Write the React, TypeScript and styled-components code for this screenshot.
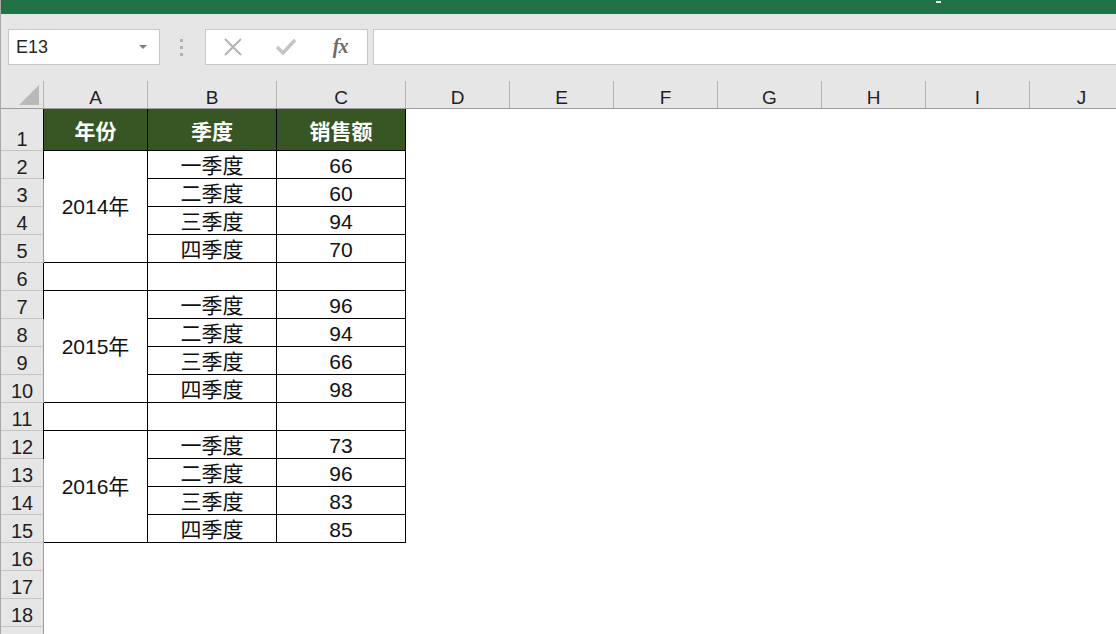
import React from "react";
import styled, { createGlobalStyle } from "styled-components";

const GlobalStyle = createGlobalStyle`
  html, body {
    margin: 0;
    padding: 0;
    width: 1116px;
    height: 634px;
    overflow: hidden;
    background: #ffffff;
  }
  body {
    font-family: "Liberation Sans", "Noto Sans CJK SC", sans-serif;
  }
`;

const Window = styled.div`
  width: 1116px;
  height: 634px;
  overflow: hidden;
  box-sizing: border-box;
  border-left: 1px solid #a8a8a8;
  display: flex;
  flex-direction: column;
`;

const TitleBar = styled.div`
  height: 14px;
  background: #217346;
  display: flex;
  align-items: flex-start;
  flex-shrink: 0;
`;

const WinDash = styled.div`
  margin-left: 935px;
  margin-top: 1px;
  width: 5px;
  height: 2px;
  background: #ffffff;
`;

const Toolbar = styled.div`
  height: 67px;
  flex-shrink: 0;
  box-sizing: border-box;
  background: #e6e6e6;
  display: flex;
  align-items: flex-start;
  padding: 15px 0 0 7px;
`;

const NameBox = styled.div`
  width: 152px;
  height: 36px;
  box-sizing: border-box;
  background: #ffffff;
  border: 1px solid #c6c6c6;
  display: flex;
  align-items: center;
  padding: 0 12px 0 7px;
  font-size: 18px;
  color: #262626;
`;

const DropArrow = styled.span`
  margin-left: auto;
  width: 0;
  height: 0;
  border-left: 4px solid transparent;
  border-right: 4px solid transparent;
  border-top: 4px solid #808080;
`;

const Grip = styled.div`
  margin: 10px 22px 0 20px;
  display: flex;
  flex-direction: column;
  gap: 4px;
`;

const GripDot = styled.span`
  width: 3px;
  height: 3px;
  background: #b0b0b0;
`;

const FxBox = styled.div`
  width: 163px;
  height: 36px;
  box-sizing: border-box;
  background: #ffffff;
  border: 1px solid #c6c6c6;
  display: grid;
  grid-template-columns: repeat(3, 1fr);
  align-items: center;
  justify-items: center;
`;

const FxLabel = styled.span`
  font-family: "Liberation Serif", "DejaVu Serif", serif;
  font-style: italic;
  font-weight: bold;
  font-size: 20px;
  color: #6b6b6b;
  letter-spacing: -1px;
  margin-top: -2px;
`;

const FormulaInput = styled.div`
  flex: 1;
  margin-left: 5px;
  height: 36px;
  box-sizing: border-box;
  background: #ffffff;
  border: 1px solid #c6c6c6;
  border-right: none;
`;

const Sheet = styled.div`
  display: grid;
  grid-template-columns: 43px 104px 129px 129px repeat(7, 104px);
  grid-template-rows: 28px 42px repeat(18, 28px);
  background: #ffffff;
`;

const Corner = styled.div`
  background: #e6e6e6;
  box-sizing: border-box;
  border-right: 1px solid #b4b4b4;
  border-bottom: 1px solid #9c9c9c;
  display: flex;
  align-items: flex-end;
  justify-content: flex-end;
  padding: 0 4px 3px 0;
`;

const CornerTriangle = styled.span`
  width: 0;
  height: 0;
  border-left: 20px solid transparent;
  border-bottom: 20px solid #b8b8b8;
`;

const ColHead = styled.div`
  background: #e6e6e6;
  box-sizing: border-box;
  border-right: 1px solid #b4b4b4;
  border-bottom: 1px solid #9c9c9c;
  display: flex;
  align-items: flex-end;
  justify-content: center;
  font-size: 19px;
  line-height: 21px;
  color: #1f1f1f;
`;

const RowNum = styled.div`
  grid-column: 1;
  background: #e6e6e6;
  box-sizing: border-box;
  border-right: 1px solid #9c9c9c;
  border-bottom: 1px solid #c4c4c4;
  display: flex;
  align-items: flex-end;
  justify-content: center;
  font-size: 20px;
  line-height: 22px;
  color: #1f1f1f;
`;

const Cell = styled.div<{ $first?: boolean; $span?: number; $head?: boolean }>`
  box-sizing: border-box;
  border-right: 1px solid #000000;
  border-bottom: 1px solid #000000;
  ${(p) => (p.$first ? "border-left: 1px solid #000000; margin-left: -1px;" : "")}
  ${(p) => (p.$span ? `grid-row: span ${p.$span};` : "")}
  background: ${(p) => (p.$head ? "#375623" : "#ffffff")};
  color: ${(p) => (p.$head ? "#ffffff" : "#111111")};
  font-weight: ${(p) => (p.$head ? 700 : 400)};
  font-size: 21px;
  line-height: 24px;
  display: flex;
  justify-content: center;
  align-items: ${(p) => (p.$head || p.$span ? "center" : "flex-end")};
  padding-top: ${(p) => (p.$head ? "4px" : "0")};
`;

const XIcon = () => (
  <svg width="20" height="18" viewBox="0 0 20 18">
    <path d="M2 1 L18 17 M18 1 L2 17" stroke="#b3b3b3" strokeWidth="2" fill="none" />
  </svg>
);

const CheckIcon = () => (
  <svg width="24" height="18" viewBox="0 0 24 18">
    <path d="M3 9 L9 15 L21 2" stroke="#c4c4c4" strokeWidth="3.4" fill="none" />
  </svg>
);

const columns = ["A", "B", "C", "D", "E", "F", "G", "H", "I", "J"];
const quarters = ["一季度", "二季度", "三季度", "四季度"];
const years = [
  { year: "2014年", values: [66, 60, 94, 70] },
  { year: "2015年", values: [96, 94, 66, 98] },
  { year: "2016年", values: [73, 96, 83, 85] },
];

function App() {
  const body: React.ReactNode[] = [];
  let row = 2;
  years.forEach((y, yi) => {
    y.values.forEach((v, qi) => {
      body.push(<RowNum key={`n${row}`}>{row}</RowNum>);
      if (qi === 0)
        body.push(
          <Cell key={`a${row}`} $first $span={4}>
            {y.year}
          </Cell>
        );
      body.push(<Cell key={`b${row}`}>{quarters[qi]}</Cell>);
      body.push(<Cell key={`c${row}`}>{v}</Cell>);
      row++;
    });
    if (yi < years.length - 1) {
      body.push(<RowNum key={`n${row}`}>{row}</RowNum>);
      body.push(<Cell key={`a${row}`} $first />);
      body.push(<Cell key={`b${row}`} />);
      body.push(<Cell key={`c${row}`} />);
      row++;
    }
  });
  for (; row <= 19; row++) {
    // row 19 only peeks in at the bottom edge, its number is below the fold
    body.push(<RowNum key={`n${row}`}>{row < 19 ? row : ""}</RowNum>);
  }

  return (
    <>
      <GlobalStyle />
      <Window>
        <TitleBar>
          <WinDash />
        </TitleBar>
        <Toolbar>
          <NameBox>
            E13
            <DropArrow />
          </NameBox>
          <Grip>
            <GripDot />
            <GripDot />
            <GripDot />
          </Grip>
          <FxBox>
            <XIcon />
            <CheckIcon />
            <FxLabel>fx</FxLabel>
          </FxBox>
          <FormulaInput />
        </Toolbar>
        <Sheet>
          <Corner>
            <CornerTriangle />
          </Corner>
          {columns.map((c) => (
            <ColHead key={c}>{c}</ColHead>
          ))}
          <RowNum>1</RowNum>
          <Cell $head $first>年份</Cell>
          <Cell $head>季度</Cell>
          <Cell $head>销售额</Cell>
          {body}
        </Sheet>
      </Window>
    </>
  );
}

export default App;
